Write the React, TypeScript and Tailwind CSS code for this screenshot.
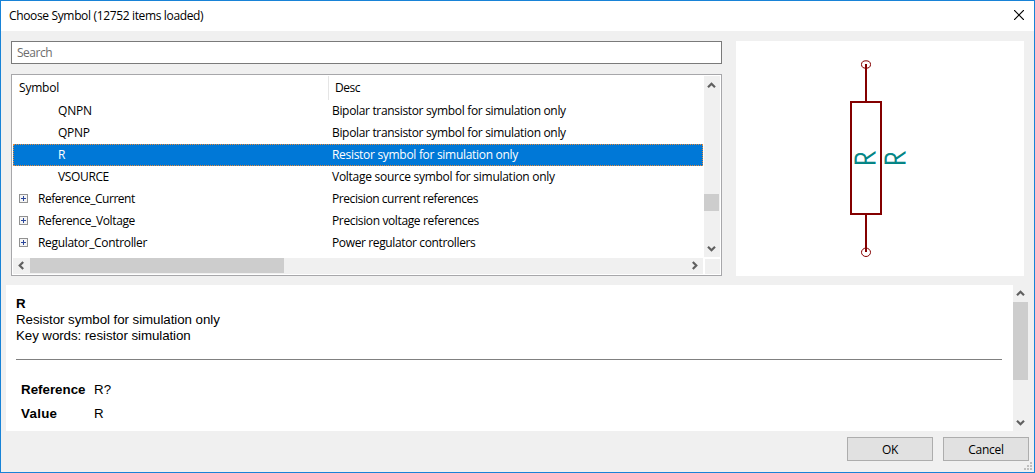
import React from "react";

type Row = { name: string; desc: string; group?: boolean; selected?: boolean; nameTrack: string; descTrack: string };

const rows: Row[] = [
  { name: "QNPN", desc: "Bipolar transistor symbol for simulation only", nameTrack: "tracking-[-0.2px]", descTrack: "tracking-[-0.33px]" },
  { name: "QPNP", desc: "Bipolar transistor symbol for simulation only", nameTrack: "tracking-[-0.3px]", descTrack: "tracking-[-0.33px]" },
  { name: "R", desc: "Resistor symbol for simulation only", selected: true, nameTrack: "tracking-[-0.3px]", descTrack: "tracking-[-0.3px]" },
  { name: "VSOURCE", desc: "Voltage source symbol for simulation only", nameTrack: "tracking-[-0.36px]", descTrack: "tracking-[-0.27px]" },
  { name: "Reference_Current", desc: "Precision current references", group: true, nameTrack: "tracking-[-0.47px]", descTrack: "tracking-[-0.43px]" },
  { name: "Reference_Voltage", desc: "Precision voltage references", group: true, nameTrack: "tracking-[-0.37px]", descTrack: "tracking-[-0.37px]" },
  { name: "Regulator_Controller", desc: "Power regulator controllers", group: true, nameTrack: "tracking-[-0.33px]", descTrack: "tracking-[-0.37px]" },
];

function Arrow({ turn }: { turn: string }) {
  return (
    <svg className={"block size-[9px] shrink-0 " + turn} viewBox="0 0 9 9">
      <path d="M1 6.2 4.5 2.7 8 6.2" fill="none" stroke="#606060" strokeWidth="2.2" />
    </svg>
  );
}

function Expander() {
  return (
    <svg className="block size-[9px]" viewBox="0 0 9 9" shapeRendering="crispEdges">
      <rect x="0.5" y="0.5" width="8" height="8" fill="#f5f5f5" stroke="#919191" />
      <path d="M2 4.5h5M4.5 2v5" stroke="#2b479b" />
    </svg>
  );
}

function TreeRow({ row }: { row: Row }) {
  return (
    <div
      className={
        "flex h-[22px] w-[690px] items-center border " +
        (row.selected ? "border-dotted border-[#e58a3a] bg-[#0078d7] text-white" : "border-transparent")
      }
    >
      <div className={"flex w-[318px] shrink-0 items-center " + (row.group ? "pl-[5px]" : "pl-[44px]")}>
        {row.group && (
          <span className="mr-[10px] mb-px block">
            <Expander />
          </span>
        )}
        <span className={"whitespace-nowrap " + row.nameTrack}>{row.name}</span>
      </div>
      <span className={"whitespace-nowrap " + row.descTrack}>{row.desc}</span>
    </div>
  );
}

function SymbolTree() {
  return (
    <div className="mt-[10px] flex h-[202px] w-[711px] flex-col border border-[#a7a7aa] bg-white p-px">
      <div className="flex h-[182px]">
        <div className="w-[691px] overflow-hidden">
          <div className="flex h-6">
            <div className="h-6 w-[316px] border-r border-[#e5e5e5] pl-[6px] leading-[24px] tracking-[-0.2px]">Symbol</div>
            <div className="pl-[6px] leading-[24px] tracking-[-0.5px]">Desc</div>
          </div>
          {rows.map((r) => (
            <TreeRow key={r.name} row={r} />
          ))}
        </div>
        <div className="flex h-[181px] w-4 flex-col bg-[#f0f0f0] pt-[5px] pb-[4px]">
          <div className="pl-[3px]">
            <Arrow turn="" />
          </div>
          <div className="mt-[104px] h-[17px] w-[15px] bg-[#cdcdcd]" />
          <div className="flex-1" />
          <div className="pl-[3px]">
            <Arrow turn="rotate-180" />
          </div>
        </div>
      </div>
      <div className="flex h-4">
        <div className="flex h-4 w-[690px] items-start bg-[#f0f0f0]">
          <div className="flex w-[17px] justify-center pt-[3px]">
            <Arrow turn="-rotate-90" />
          </div>
          <div className="h-[15px] w-[254px] bg-[#cdcdcd]" />
          <div className="flex-1" />
          <div className="flex w-[17px] justify-center pt-[3px]">
            <Arrow turn="rotate-90" />
          </div>
        </div>
        <div className="mt-px ml-[2px] h-[15px] w-[15px] bg-[#f0f0f0]" />
      </div>
    </div>
  );
}

function Preview() {
  return (
    <svg className="block h-[235px] w-[288px] bg-white" viewBox="736 41 288 235">
      <g fill="none" stroke="#840000" strokeWidth="2" shapeRendering="crispEdges">
        <path d="M866 64v38M866 214v38" />
        <rect x="851" y="102" width="30" height="112" />
      </g>
      <g fill="none" stroke="#840000" strokeWidth="1">
        <ellipse cx="866" cy="64.5" rx="4.5" ry="3.7" />
        <ellipse cx="866" cy="252.3" rx="4.5" ry="4.2" />
      </g>
      <g fill="#008484" fontFamily="Lato, sans-serif" fontWeight="300" fontSize="27.5" stroke="#008484" strokeWidth="0.9">
        <text transform="translate(874.7 166) rotate(-90) scale(0.87 1)">R</text>
        <text transform="translate(904.5 166) rotate(-90) scale(0.87 1)">R</text>
      </g>
    </svg>
  );
}

function Details() {
  return (
    <div className="mt-[9px] ml-[5px] flex h-[146px] w-[1023px] bg-white font-['Liberation_Sans',Arial,sans-serif] text-[13.33px] leading-4 text-black">
      <div className="w-[1007px] pt-[11px] pl-[10px]">
        <div className="font-bold">R</div>
        <div className="tracking-[-0.06px]">Resistor symbol for simulation only</div>
        <div className="tracking-[-0.08px]">Key words: resistor simulation</div>
        <div className="mt-[15px] h-px w-[986px] bg-[#808080]" />
        <div className="mt-[22px] grid grid-cols-[73px_1fr] gap-y-2 pl-[5px]">
          <div className="font-bold">Reference</div>
          <div>R?</div>
          <div className="font-bold tracking-[0.3px]">Value</div>
          <div>R</div>
        </div>
      </div>
      <div className="flex w-4 flex-col bg-[#f0f0f0] pt-[4px] pb-[4px]">
        <div className="pl-[3px]">
          <Arrow turn="" />
        </div>
        <div className="mt-[4px] h-[78px] w-[15px] bg-[#cdcdcd]" />
        <div className="flex-1" />
        <div className="pl-[3px]">
          <Arrow turn="rotate-180" />
        </div>
      </div>
    </div>
  );
}

function DialogButton({ label }: { label: string }) {
  return (
    <button className="h-6 w-[86px] border border-[#adadad] bg-[#e1e1e1] text-center leading-[21px] tracking-[-0.25px]">{label}</button>
  );
}

export default function App() {
  return (
    <div className="relative flex h-[473px] w-[1035px] flex-col overflow-hidden border border-[#1883d7] bg-[#f0f0f0] font-['Open_Sans','Noto_Sans',sans-serif] text-[12px] leading-4 text-black">
      <header className="flex h-[30px] items-center justify-between bg-white pr-[10px] pl-[8px]">
        <span className="tracking-[-0.35px]">Choose Symbol (12752 items loaded)</span>
        <svg className="mb-[2px] block size-[10px]" viewBox="0 0 10 10">
          <path d="M0 0l10 10M10 0L0 10" stroke="#000" strokeWidth="1.2" />
        </svg>
      </header>
      <main className="flex pt-[10px] pl-[10px]">
        <div className="w-[725px]">
          <div className="flex h-[23px] w-[711px] items-center border border-[#7a7a7a] bg-white pl-[5px] tracking-[-0.5px] text-[#6d6d6d]">
            Search
          </div>
          <SymbolTree />
        </div>
        <Preview />
      </main>
      <Details />
      <footer className="mt-[6px] flex justify-end gap-[10px] pr-[5px]">
        <DialogButton label="OK" />
        <DialogButton label="Cancel" />
      </footer>
      <svg className="absolute right-[2px] bottom-[2px] size-2" viewBox="0 0 8 8" fill="#bfbfbf" shapeRendering="crispEdges">
        <path d="M6 0h2v2H6zM3 3h2v2H3zM6 3h2v2H6zM0 6h2v2H0zM3 6h2v2H3zM6 6h2v2H6z" />
      </svg>
    </div>
  );
}
